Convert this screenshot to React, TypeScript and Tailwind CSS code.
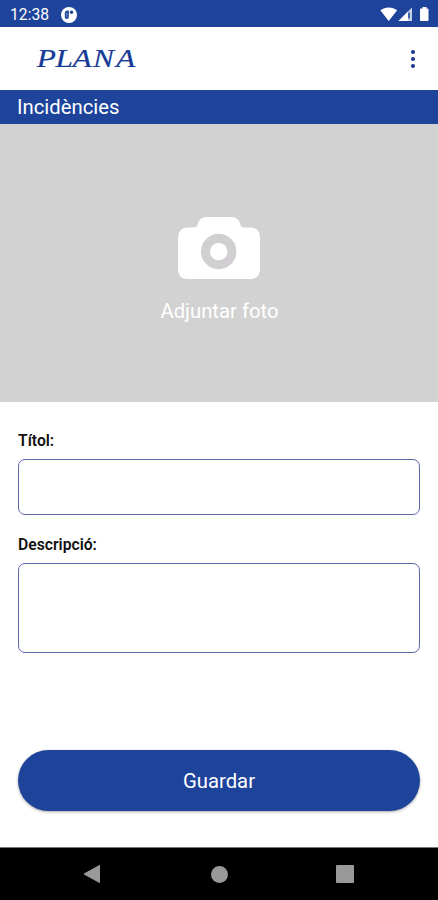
function StatusBar() {
  return (
    <div className="flex h-[27px] items-center bg-[#1e439b] pr-[8px] pl-[10px] text-white">
      <span className="pt-[2px] text-[15.700px] leading-[20px]">12:38</span>
      <svg className="mt-[2px] ml-[12px] h-4 w-4" viewBox="0 0 16 16">
        <circle cx="8" cy="8" r="8" fill="#fff" />
        <path d="M7.800 3.500H6Q3.800 3.500 3.800 6V9.800Q3.800 12 5.800 12Q7.800 12 7.800 9.800z" fill="#1e439b" />
        <path d="M5.700 5.500v4.500" stroke="#fff" strokeWidth=".4" />
        <circle cx="10.500" cy="5.300" r="1.700" fill="#1e439b" />
      </svg>
      <svg className="mt-px ml-auto h-[18px] w-[52px]" viewBox="0 0 52 18">
        <path d="M2.300 5.300C7 1.400 14.500 1.400 19.200 5.300L10.700 16z" fill="#fff" />
        <path d="M20.500 16 34 2.500V16z" fill="#fff" fillOpacity=".75" />
        <path d="M20.500 16 30 6.500V16z" fill="#fff" />
        <path d="M31 7.500v6" stroke="#1e439b" strokeWidth="1.500" />
        <path d="M42.800 3.500h1.700V2h4v1.500h1.200q.8 0 .8.8v10.900q0 .8-.8.8h-6.900q-.8 0-.8-.8V4.300q0-.8.8-.8z" fill="#fff" />
      </svg>
    </div>
  );
}

function AppBar() {
  return (
    <header className="flex h-[63px] items-center justify-between bg-white pr-[23px] pl-[34px]">
      <svg className="h-[30px] w-[104px]" viewBox="0 0 104 30">
        <g
          transform="translate(2 22.500) scale(1.280 1)"
          className="fill-[#173a96] font-['Liberation_Serif',serif] text-[24.500px] italic"
          stroke="#173a96"
          strokeWidth=".2"
        >
          <text x="0.500 15.300 28.500 44.500 62.500" y="0">
            PLANA
          </text>
        </g>
      </svg>
      <button className="flex flex-col gap-[3px]" aria-label="Menú">
        <span className="size-1 rounded-full bg-[#14348f]" />
        <span className="size-1 rounded-full bg-[#14348f]" />
        <span className="size-1 rounded-full bg-[#14348f]" />
      </button>
    </header>
  );
}

function PhotoPicker() {
  return (
    <button className="flex h-[278px] w-full flex-col items-center bg-[#d2d2d2] pt-[93px] text-white">
      <svg className="h-[62px] w-[82px]" viewBox="0 0 82 62">
        <path
          d="M10 10.500H16Q19 10.500 19.500 8Q21 0 29 0H53Q61 0 62.500 8Q63 10.500 66 10.500H72Q82 10.500 82 21V52Q82 62 72 62H10Q0 62 0 52V21Q0 10.500 10 10.500Z"
          fill="#fff"
        />
        <circle cx="40.700" cy="34.500" r="13.200" fill="none" stroke="#d1cfd1" strokeWidth="9" />
      </svg>
      <span className="mt-[20px] pl-px text-[20.300px] leading-6">Adjuntar foto</span>
    </button>
  );
}

function NavigationBar() {
  return (
    <nav className="flex h-[53px] items-center justify-between border-t border-[#777] bg-black pr-[84px] pl-[83px]">
      <svg className="h-5 w-[18px]" viewBox="0 0 18 20">
        <path d="M1 10 16.500 1.500v17z" fill="#999" stroke="#999" strokeLinejoin="round" />
      </svg>
      <span className="ml-px size-[17px] rounded-full bg-[#999]" />
      <span className="size-[18px] rounded-[1px] bg-[#999]" />
    </nav>
  );
}

export default function App() {
  return (
    <div className="flex h-[900px] w-[438px] flex-col overflow-hidden bg-white font-[Roboto,sans-serif]">
      <StatusBar />
      <AppBar />
      <h1 className="flex h-[34px] items-center bg-[#1e439b] pl-[17px] text-[20.300px] leading-6 text-white">Incidències</h1>
      <PhotoPicker />
      <form className="flex flex-1 flex-col px-[18px] pt-[29px]">
        <label className="flex flex-col text-[15.700px] leading-5 font-semibold text-[#111]">
          Títol:
          <input className="mt-[8px] h-[56px] rounded-[7px] border border-[#5e66a8] px-3 outline-none" />
        </label>
        <label className="mt-[20px] flex flex-col text-[15.700px] leading-5 font-semibold text-[#111]">
          Descripció:
          <textarea className="mt-[8px] h-[90px] resize-none rounded-[7px] border border-[#5e66a8] p-3 outline-none" />
        </label>
        <button
          type="button"
          className="mt-auto mb-[36px] h-[61px] rounded-full bg-[#1e439b] pt-px text-[20.300px] text-white shadow-[0_1px_3px_rgba(0,0,0,0.35)]"
        >
          Guardar
        </button>
      </form>
      <NavigationBar />
    </div>
  );
}
